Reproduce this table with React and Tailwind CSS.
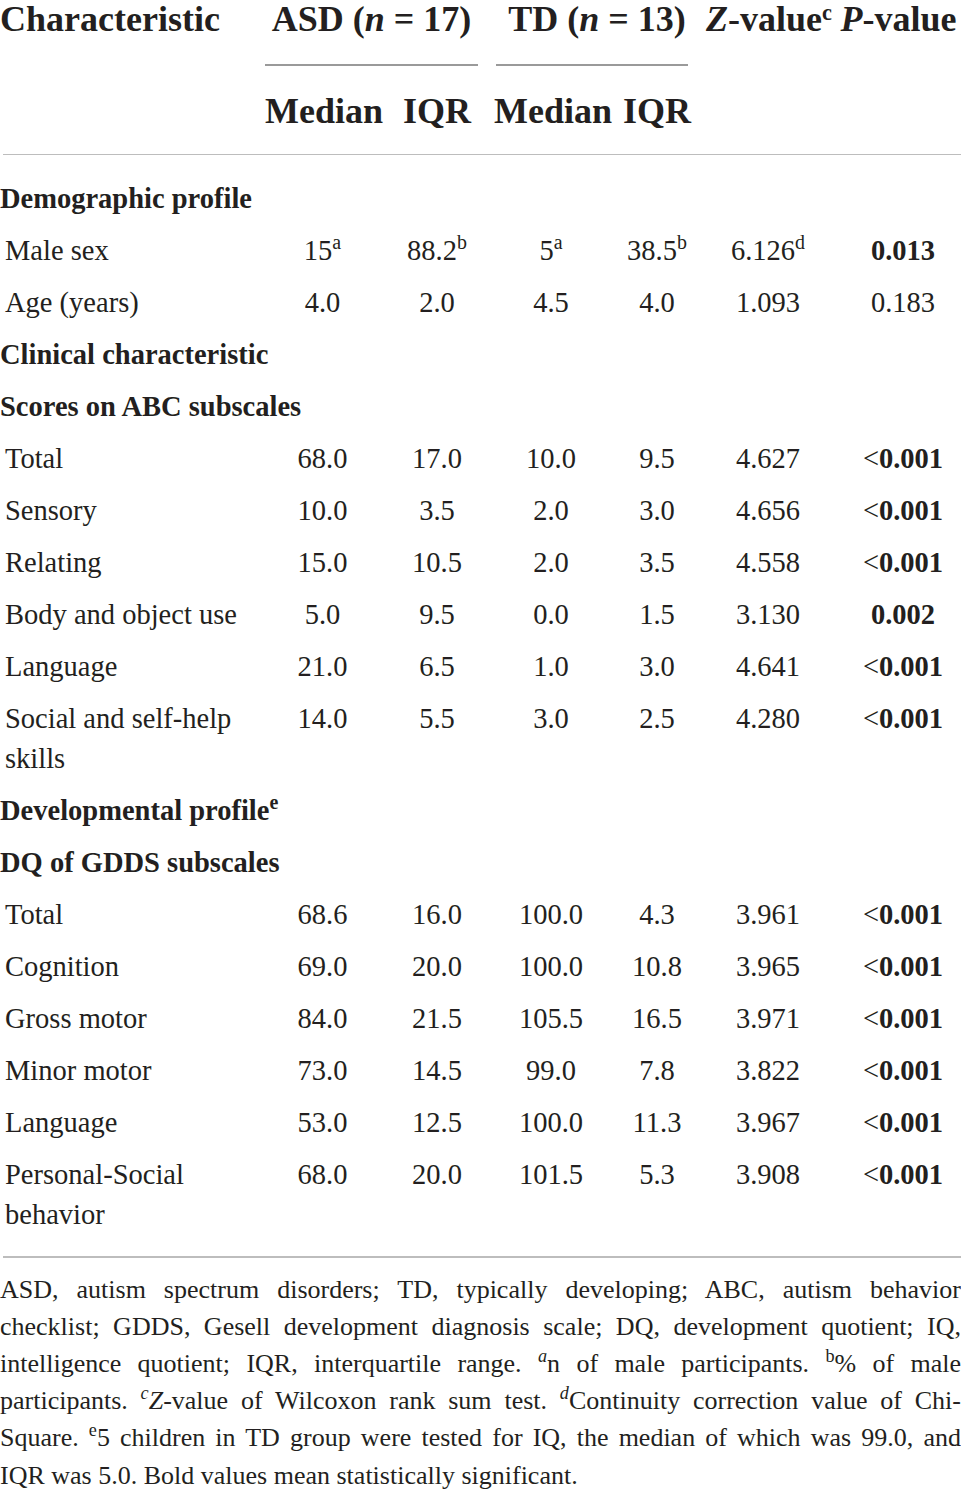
import React from "react";

const cols = "grid grid-cols-[265px_115px_114px_114px_98px_124px_131px]";

const abc = [
  ["Total", "68.0", "17.0", "10.0", "9.5", "4.627", "<0.001"],
  ["Sensory", "10.0", "3.5", "2.0", "3.0", "4.656", "<0.001"],
  ["Relating", "15.0", "10.5", "2.0", "3.5", "4.558", "<0.001"],
  ["Body and object use", "5.0", "9.5", "0.0", "1.5", "3.130", "0.002"],
  ["Language", "21.0", "6.5", "1.0", "3.0", "4.641", "<0.001"],
  ["Social and self-help skills", "14.0", "5.5", "3.0", "2.5", "4.280", "<0.001"],
];

const gdds = [
  ["Total", "68.6", "16.0", "100.0", "4.3", "3.961", "<0.001"],
  ["Cognition", "69.0", "20.0", "100.0", "10.8", "3.965", "<0.001"],
  ["Gross motor", "84.0", "21.5", "105.5", "16.5", "3.971", "<0.001"],
  ["Minor motor", "73.0", "14.5", "99.0", "7.8", "3.822", "<0.001"],
  ["Language", "53.0", "12.5", "100.0", "11.3", "3.967", "<0.001"],
  ["Personal-Social behavior", "68.0", "20.0", "101.5", "5.3", "3.908", "<0.001"],
];

function Sup({ children, italic }) {
  return (
    <sup className={`text-[0.7em] top-[-0.55em] ${italic ? "italic" : ""}`}>{children}</sup>
  );
}

function PValue({ p, bold }) {
  if (p.startsWith("<")) {
    return (
      <>
        &lt;<span className="font-bold">{p.slice(1)}</span>
      </>
    );
  }
  return <span className={bold ? "font-bold" : ""}>{p}</span>;
}

function Section({ children }) {
  return <div className="col-span-7 py-[6px] font-bold">{children}</div>;
}

function DataRow({ r }) {
  const [label, ...vals] = r;
  const p = vals[5];
  return (
    <>
      <div className="py-[6px] pl-[5px] pr-[8px]">{label}</div>
      {vals.slice(0, 5).map((v, i) => (
        <div key={i} className="py-[6px] text-center">
          {v}
        </div>
      ))}
      <div className="py-[6px] pl-[15px] text-center">
        <PValue p={p} bold={p !== "0.183"} />
      </div>
    </>
  );
}

function Line({ children, last }) {
  return (
    <div className={last ? "text-left" : "whitespace-nowrap text-justify [text-align-last:justify]"}>
      {children}
    </div>
  );
}

export default function App() {
  return (
    <div className="w-[961px] bg-white text-[#231f20] font-['Liberation_Serif',serif]">
      {/* header */}
      <div className={`${cols} pt-[1px] text-[36px] font-bold leading-[37px] whitespace-nowrap`}>
        <div>Characteristic</div>
        <div className="col-span-2 pl-[4px] pr-[20px] text-center">
          ASD (<i>n</i> = 17)
        </div>
        <div className="col-span-2 text-center pl-[2px] pr-[8px]">
          TD (<i>n</i> = 13)
        </div>
        <div className="text-center">
          <i>Z</i>-value<sup className="text-[0.62em] top-[-0.5em]">c</sup>
        </div>
        <div className="pl-[6px] text-center">
          <i>P</i>-value
        </div>
      </div>
      <div className={`${cols} mt-[26px]`}>
        <div />
        <div className="col-span-2 mr-[16px] h-[1.5px] bg-[#9a9a9a]" />
        <div className="col-span-2 ml-[2px] mr-[18px] h-[1.5px] bg-[#9a9a9a]" />
      </div>
      <div className={`${cols} mt-[25px] text-[36px] font-bold leading-[40px] whitespace-nowrap`}>
        <div />
        <div className="text-center">Median</div>
        <div className="text-center">IQR</div>
        <div className="text-center">Median</div>
        <div className="text-center">IQR</div>
      </div>
      <div className="mt-[23px] ml-[3px] h-[1.5px] bg-[#bdbdbd]" />

      {/* body */}
      <div className={`${cols} pt-[18px] text-[28.5px] leading-[40px] items-start`}>
        <Section>Demographic profile</Section>
        <div className="py-[6px] pl-[5px]">Male sex</div>
        <div className="py-[6px] text-center">15<Sup>a</Sup></div>
        <div className="py-[6px] text-center">88.2<Sup>b</Sup></div>
        <div className="py-[6px] text-center">5<Sup>a</Sup></div>
        <div className="py-[6px] text-center">38.5<Sup>b</Sup></div>
        <div className="py-[6px] text-center">6.126<Sup>d</Sup></div>
        <div className="py-[6px] pl-[15px] text-center font-bold">0.013</div>
        <DataRow r={["Age (years)", "4.0", "2.0", "4.5", "4.0", "1.093", "0.183"]} />
        <Section>Clinical characteristic</Section>
        <Section>Scores on ABC subscales</Section>
        {abc.map((r) => (
          <DataRow key={"a" + r[0]} r={r} />
        ))}
        <Section>
          Developmental profile<Sup>e</Sup>
        </Section>
        <Section>DQ of GDDS subscales</Section>
        {gdds.map((r) => (
          <DataRow key={"g" + r[0]} r={r} />
        ))}
      </div>
      <div className="mt-[15px] ml-[3px] h-[1.5px] bg-[#bdbdbd]" />

      {/* footnote */}
      <div className="mt-[13px] text-[26px] leading-[37.2px] pb-[4px]">
        <Line>ASD, autism spectrum disorders; TD, typically developing; ABC, autism behavior</Line>
        <Line>checklist; GDDS, Gesell development diagnosis scale; DQ, development quotient; IQ,</Line>
        <Line>
          intelligence quotient; IQR, interquartile range. <Sup italic>a</Sup>n of male participants.{" "}
          <Sup>b</Sup>% of male
        </Line>
        <Line>
          participants. <Sup italic>c</Sup>
          <i>Z</i>-value of Wilcoxon rank sum test. <Sup italic>d</Sup>Continuity correction value of Chi-
        </Line>
        <Line>
          Square. <Sup>e</Sup>5 children in TD group were tested for IQ, the median of which was 99.0, and
        </Line>
        <Line last>IQR was 5.0. Bold values mean statistically significant.</Line>
      </div>
    </div>
  );
}
